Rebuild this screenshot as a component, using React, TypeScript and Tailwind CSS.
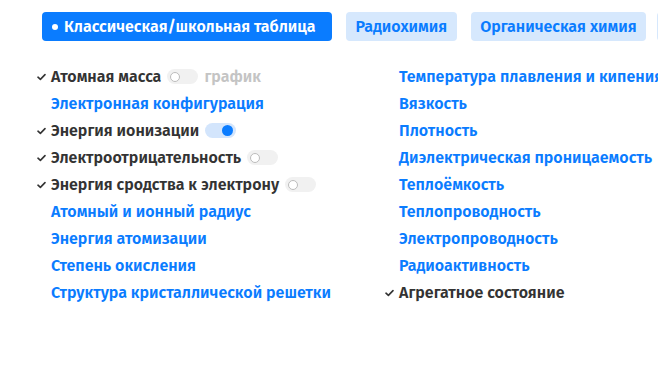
import React from 'react'

type Item = { label: string; checked?: boolean; toggle?: 'off' | 'on'; extra?: string }

const LEFT: Item[] = [
  { label: 'Атомная масса', checked: true, toggle: 'off', extra: 'график' },
  { label: 'Электронная конфигурация' },
  { label: 'Энергия ионизации', checked: true, toggle: 'on' },
  { label: 'Электроотрицательность', checked: true, toggle: 'off' },
  { label: 'Энергия сродства к электрону', checked: true, toggle: 'off' },
  { label: 'Атомный и ионный радиус' },
  { label: 'Энергия атомизации' },
  { label: 'Степень окисления' },
  { label: 'Структура кристаллической решетки' },
]

const RIGHT: Item[] = [
  { label: 'Температура плавления и кипения' },
  { label: 'Вязкость' },
  { label: 'Плотность' },
  { label: 'Диэлектрическая проницаемость' },
  { label: 'Теплоёмкость' },
  { label: 'Теплопроводность' },
  { label: 'Электропроводность' },
  { label: 'Радиоактивность' },
  { label: 'Агрегатное состояние', checked: true },
]

function Check() {
  return (
    <svg width="9" height="8" viewBox="0 0 9 8" className="shrink-0">
      <path d="M1 4.2 L3.4 6.4 L8 1.6" fill="none" stroke="#333" strokeWidth="1.6" strokeLinecap="round" strokeLinejoin="round" />
    </svg>
  )
}

function Toggle({ on }: { on: boolean }) {
  return on ? (
    <span className="ml-[6px] inline-flex h-[15px] w-[31px] items-center justify-end rounded-full bg-[#d3e5fc] pr-[3px]">
      <span className="h-[11px] w-[11px] rounded-full bg-[#0a7cff]" />
    </span>
  ) : (
    <span className="ml-[6px] inline-flex h-[15px] w-[31px] items-center rounded-full bg-[#f1f1f1] pl-[3px]">
      <span className="h-[10px] w-[10px] rounded-full border-[1.5px] border-[#bcbcbc] bg-white" />
    </span>
  )
}

function Row({ item }: { item: Item }) {
  return (
    <div className="flex h-[27px] items-center">
      <span className="flex w-[14px] items-center">{item.checked && <Check />}</span>
      <span className={`whitespace-nowrap ${item.checked ? 'text-[#333333]' : 'text-[#0a7cff]'}`}>{item.label}</span>
      {item.toggle && <Toggle on={item.toggle === 'on'} />}
      {item.extra && <span className="ml-[6px] text-[#c4c4c4]">{item.extra}</span>}
    </div>
  )
}

export default function App() {
  return (
    <div
      className="h-[382px] w-[658px] overflow-hidden bg-white pt-[12px] text-[16px] font-semibold"
      style={{ fontFamily: '"Fira Sans", "Noto Sans", sans-serif' }}
    >
      <div className="flex gap-[14px] pl-[42px]">
        <div className="flex h-[29px] shrink-0 items-center gap-[6px] rounded-[4px] bg-[#0a7cff] pl-[10px] pr-[16px] text-white">
          <span className="h-[6px] w-[6px] rounded-full bg-white" />
          <span className="whitespace-nowrap">Классическая/школьная таблица</span>
        </div>
        <div className="flex h-[29px] shrink-0 items-center rounded-[4px] bg-[#d6e8fd] px-[10px] text-[#0a7cff]">Радиохимия</div>
        <div className="flex h-[29px] shrink-0 items-center rounded-[4px] bg-[#d6e8fd] px-[9px] text-[#0a7cff] whitespace-nowrap">Органическая химия</div>
        <div className="-ml-[3px] flex h-[29px] w-[40px] shrink-0 items-center rounded-[4px] bg-[#d6e8fd]" />
      </div>
      <div className="mt-[22px] flex pl-[37px]">
        <div className="w-[348px] shrink-0">
          {LEFT.map((it) => (
            <Row key={it.label} item={it} />
          ))}
        </div>
        <div className="shrink-0">
          {RIGHT.map((it) => (
            <Row key={it.label} item={it} />
          ))}
        </div>
      </div>
    </div>
  )
}
